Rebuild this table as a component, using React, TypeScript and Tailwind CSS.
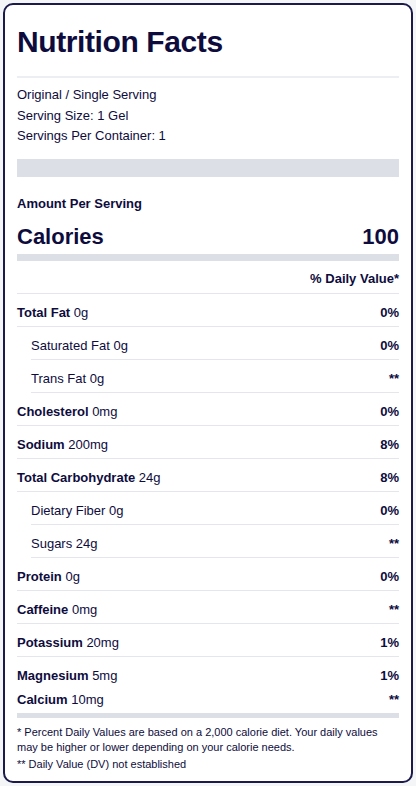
type Row = {
  label: string;
  amount: string;
  dv: string;
  sub?: boolean;
};

const rows: Row[] = [
  { label: "Total Fat", amount: "0g", dv: "0%" },
  { label: "Saturated Fat", amount: "0g", dv: "0%", sub: true },
  { label: "Trans Fat", amount: "0g", dv: "**", sub: true },
  { label: "Cholesterol", amount: "0mg", dv: "0%" },
  { label: "Sodium", amount: "200mg", dv: "8%" },
  { label: "Total Carbohydrate", amount: "24g", dv: "8%" },
  { label: "Dietary Fiber", amount: "0g", dv: "0%", sub: true },
  { label: "Sugars", amount: "24g", dv: "**", sub: true },
  { label: "Protein", amount: "0g", dv: "0%" },
  { label: "Caffeine", amount: "0mg", dv: "**" },
  { label: "Potassium", amount: "20mg", dv: "1%" },
];

function NutrientRow({ row }: { row: Row }) {
  return (
    <div
      className={
        "flex items-center justify-between border-b border-[#e4e6eb] pt-[9px] pb-[3px] text-[13px] leading-5 " +
        (row.sub ? "ml-[14px]" : "")
      }
    >
      <span>
        {row.sub ? (
          <span>
            {row.label} {row.amount}
          </span>
        ) : (
          <>
            <span className="font-bold">{row.label}</span> {row.amount}
          </>
        )}
      </span>
      <span className="font-bold">{row.dv}</span>
    </div>
  );
}

export default function App() {
  return (
    <div className="min-h-screen bg-[#f4f5f7] p-[3px] font-['Liberation_Sans',Arial,sans-serif] text-[#0e0c3d]">
      <div className="rounded-[10px] border-2 border-[#1b1a4a] bg-white px-[12px] pt-[13px] pb-[9px]">
        {/* Title */}
        <h1 className="border-b-2 border-[#eceef2] pb-[10px] text-[30px] leading-[48px] font-bold tracking-[-0.4px]">
          Nutrition Facts
        </h1>

        <div className="pt-[7px] text-[13px] leading-[20.5px]">
          <p>Original / Single Serving</p>
          <p>Serving Size: 1 Gel</p>
          <p>Servings Per Container: 1</p>
        </div>

        <div className="mt-[12px] h-[18px] bg-[#dcdfe6]" />

        {/* Calories */}
        <p className="mt-[17px] text-[13px] leading-5 font-bold">Amount Per Serving</p>
        <div className="mt-[9px] flex items-center justify-between text-[22px] leading-[28px] font-bold">
          <span>Calories</span>
          <span>100</span>
        </div>
        <div className="mt-[3px] h-[7px] bg-[#dcdfe6]" />

        <p className="mt-[8px] border-b border-[#e4e6eb] pb-[4px] text-right text-[13px] leading-5 font-bold">
          % Daily Value*
        </p>

        {rows.map((r) => (
          <NutrientRow key={r.label} row={r} />
        ))}

        <div className="flex items-center justify-between pt-[9px] pb-[3px] text-[13px] leading-5">
          <span>
            <span className="font-bold">Magnesium</span> 5mg
          </span>
          <span className="font-bold">1%</span>
        </div>
        <div className="flex items-center justify-between pt-[1px] pb-[3px] text-[13px] leading-5">
          <span>
            <span className="font-bold">Calcium</span> 10mg
          </span>
          <span className="font-bold">**</span>
        </div>
        <div className="h-[5px] bg-[#dcdfe6]" />

        {/* Footnotes */}
        <div className="pt-[7px] text-[11px] leading-[15px]">
          <p>
            * Percent Daily Values are based on a 2,000 calorie diet. Your daily values may be
            higher or lower depending on your calorie needs.
          </p>
          <p className="mt-[2px]">** Daily Value (DV) not established</p>
        </div>
      </div>
    </div>
  );
}
